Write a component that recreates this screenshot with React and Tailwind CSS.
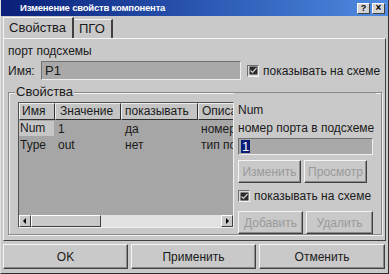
import React from "react";

const font = { fontFamily: '"Liberation Sans", Arial, sans-serif' };

function Btn({ children, className = "", disabled }) {
  return (
    <div
      className={
        "flex items-center justify-center whitespace-nowrap border border-t-[#f4f4f4] border-l-[#f4f4f4] border-r-[#404040] border-b-[#404040] shadow-[inset_-1px_-1px_0_#8a8a8a] " +
        (disabled ? "text-[#9a9a9a] " : "text-[#1a1a1a] ") +
        className
      }
    >
      {children}
    </div>
  );
}

function Check() {
  return (
    <div className="w-[12px] h-[12px] shrink-0 border border-t-[#707070] border-l-[#707070] border-r-[#f0f0f0] border-b-[#f0f0f0] bg-[#d8d8d8] flex items-center justify-center">
      <svg width="9" height="9" viewBox="0 0 9 9">
        <rect x="0.5" y="0.5" width="8" height="8" fill="#2a2a2a" />
        <path d="M1.5 4.5 L3.5 6.5 L7.5 2" stroke="#d0d0d0" strokeWidth="1.2" fill="none" />
      </svg>
    </div>
  );
}

const hdr =
  "shrink-0 overflow-hidden whitespace-nowrap border border-t-[#eeeeee] border-l-[#eeeeee] border-r-[#303030] border-b-[#303030] bg-[#c4c4c4] leading-[15px]";

export default function App() {
  return (
    <div
      className="w-[389px] h-[274px] bg-[#c9c9c9] border border-t-0 border-l-[#e0e0e0] border-r-[#303030] border-b-[#303030] flex flex-col overflow-hidden text-[12px] text-[#1a1a1a]"
      style={font}
    >
      {/* title bar */}
      <div className="h-[16px] shrink-0 bg-gradient-to-r from-[#0a1e78] via-[#2a55b0] to-[#4f8be0] flex items-center justify-between pl-[19px] pr-[3px]">
        <span className="text-white font-bold text-[9.5px] tracking-[-0.2px] leading-none whitespace-nowrap">
          Изменение свойств компонента
        </span>
        <div className="flex gap-[2px]">
          <div className="w-[13px] h-[11px] bg-[#d4d4d4] border border-t-white border-l-white border-r-[#404040] border-b-[#404040] flex items-center justify-center text-[9px] font-bold leading-none text-black">
            ?
          </div>
          <div className="w-[13px] h-[11px] bg-[#d4d4d4] border border-t-white border-l-white border-r-[#404040] border-b-[#404040] flex items-center justify-center text-[10px] font-bold leading-none text-black">
            ×
          </div>
        </div>
      </div>

      {/* tabs */}
      <div className="flex items-end h-[21px] shrink-0 pl-[2px] mt-[1px]">
        <div className="h-[21px] w-[71px] border-t border-l border-t-[#f4f4f4] border-l-[#f4f4f4] border-r-2 border-r-[#404040] flex items-center pl-[5px] text-[13px] bg-[#c9c9c9]">
          Свойства
        </div>
        <div className="h-[19px] w-[39px] border-t border-t-[#f4f4f4] border-r-2 border-r-[#404040] flex items-center pl-[5px] text-[13px]">
          ПГО
        </div>
      </div>

      {/* panel */}
      <div className="mx-[2px] h-[203px] shrink-0 border border-t-[#f4f4f4] border-l-[#f4f4f4] border-r-[#404040] border-b-[#404040] flex flex-col px-[4px]">
        <div className="mt-[4px] h-[16px] leading-[16px]">порт подсхемы</div>
        <div className="mt-[2px] flex items-center h-[19px]">
          <span className="w-[33px]">Имя:</span>
          <div className="w-[200px] h-[19px] bg-[#a9a9a9] border border-t-[#707070] border-l-[#707070] border-r-[#eeeeee] border-b-[#eeeeee] pl-[3px] leading-[17px] text-[13px]">
            P1
          </div>
          <div className="ml-[6px]">
            <Check />
          </div>
          <span className="ml-[4px] whitespace-nowrap">показывать на схеме</span>
        </div>

        {/* group box */}
        <div className="mt-[12px] relative h-[143px] w-[374px] border border-[#8a8a8a] shadow-[1px_1px_0_#f0f0f0,inset_1px_1px_0_#f0f0f0] flex">
          <span className="absolute -top-[9px] left-[6px] bg-[#c9c9c9] px-[1px] text-[13px] leading-[16px]">
            Свойства
          </span>
          {/* list */}
          <div className="mt-[9px] ml-[9px] w-[216px] h-[126px] shrink-0 border border-t-[#505050] border-l-[#505050] border-r-[#f0f0f0] border-b-[#f0f0f0] bg-[#a6a6a6] flex flex-col overflow-hidden">
            <div className="flex h-[17px] shrink-0">
              <div className={hdr + " w-[36px] pl-[2px]"}>Имя</div>
              <div className={hdr + " w-[66px] pl-[4px]"}>Значение</div>
              <div className={hdr + " w-[77px] pl-[3px]"}>показывать</div>
              <div className={hdr + " w-[35px] pl-[3px] border-r-0"}>Описа</div>
            </div>
            <div className="flex h-[17px] items-center whitespace-nowrap">
              <div className="w-[35px] shrink-0 h-[15px] bg-[#c6c6c6] leading-[15px] pl-[1px]">Num</div>
              <div className="w-[67px] shrink-0 pl-[4px]">1</div>
              <div className="w-[77px] shrink-0 pl-[4px]">да</div>
              <div className="w-[35px] shrink-0 overflow-hidden pl-[3px]">номер</div>
            </div>
            <div className="flex h-[16px] items-center whitespace-nowrap">
              <div className="w-[35px] shrink-0 pl-[1px]">Type</div>
              <div className="w-[67px] shrink-0 pl-[4px]">out</div>
              <div className="w-[77px] shrink-0 pl-[4px]">нет</div>
              <div className="w-[35px] shrink-0 overflow-hidden pl-[3px]">тип по</div>
            </div>
            <div className="flex-1" />
            {/* scrollbar */}
            <div className="h-[12px] flex bg-[#e2e2e2] shrink-0">
              <div className="w-[12px] h-[12px] bg-[#c9c9c9] border border-t-white border-l-white border-r-[#404040] border-b-[#404040] flex items-center justify-center">
                <svg width="4" height="6" viewBox="0 0 4 6"><path d="M3 0 L0 3 L3 6Z" fill="#000" /></svg>
              </div>
              <div className="w-[70px] h-[12px] bg-[#c9c9c9] border border-t-white border-l-white border-r-[#404040] border-b-[#404040]" />
              <div className="flex-1" />
              <div className="w-[12px] h-[12px] bg-[#c9c9c9] border border-t-white border-l-white border-r-[#404040] border-b-[#404040] flex items-center justify-center">
                <svg width="4" height="6" viewBox="0 0 4 6"><path d="M1 0 L4 3 L1 6Z" fill="#000" /></svg>
              </div>
            </div>
          </div>

          {/* right side */}
          <div className="flex flex-col pl-[4px] w-[142px] bg-[#c9c9c9]">
            <div className="mt-[9px] leading-[16px]">Num</div>
            <div className="leading-[16px] mt-[2px] whitespace-nowrap">номер порта в подсхеме</div>
            <div className="mt-[2px] w-[135px] h-[18px] bg-[#a9a9a9] border border-t-[#707070] border-l-[#707070] border-r-[#eeeeee] border-b-[#eeeeee] flex items-center pl-[2px]">
              <span className="bg-[#0a1e78] text-white leading-[13px] text-[13px] px-[1px]">1</span>
            </div>
            <div className="mt-[5px] flex gap-[3px]">
              <Btn disabled className="w-[63px] h-[23px]">Изменить</Btn>
              <Btn disabled className="w-[63px] h-[23px]">Просмотр</Btn>
            </div>
            <div className="mt-[5px] flex items-center h-[16px]">
              <Check />
              <span className="ml-[4px] whitespace-nowrap">показывать на схеме</span>
            </div>
            <div className="mt-[7px] flex gap-[3px]">
              <Btn disabled className="w-[65px] h-[23px]">Добавить</Btn>
              <Btn disabled className="w-[67px] h-[23px]">Удалить</Btn>
            </div>
          </div>
        </div>
      </div>

      {/* bottom buttons */}
      <div className="mt-[3px] px-[2px] flex gap-[3px]">
        <Btn className="w-[125px] h-[25px]">OK</Btn>
        <Btn className="w-[125px] h-[25px]">Применить</Btn>
        <Btn className="w-[126px] h-[25px]">Отменить</Btn>
      </div>
    </div>
  );
}
